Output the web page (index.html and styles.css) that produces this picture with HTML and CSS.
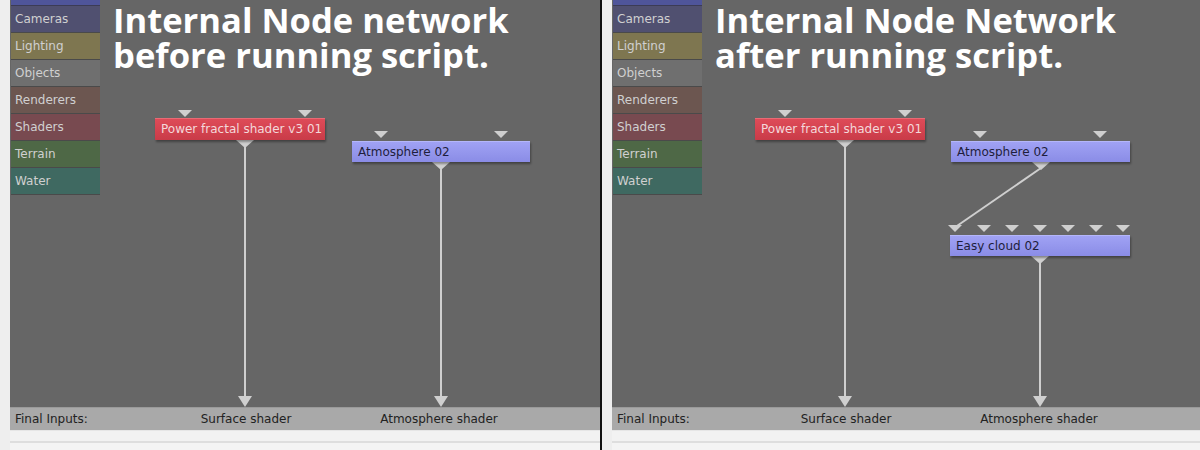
FILE: index.html
```html
<!DOCTYPE html>
<html>
<head>
<meta charset="utf-8">
<link rel="stylesheet" href="styles.css">
</head>
<body>
<div class="screen">
  <section class="panel panel-left">
    <div class="strip"></div>
    <div class="main">
      <div class="canvas">
        <ul class="cats">
          <li class="cat c-top"></li>
          <li class="cat c-cam">Cameras</li>
          <li class="cat c-light">Lighting</li>
          <li class="cat c-obj">Objects</li>
          <li class="cat c-rend">Renderers</li>
          <li class="cat c-shad">Shaders</li>
          <li class="cat c-terr">Terrain</li>
          <li class="cat c-water">Water</li>
        </ul>
        <h1 class="title">Internal Node network<br>before running script.</h1>
        <svg class="wires" width="590" height="407" viewBox="0 0 590 407">
          <g fill="#cfcfcf">
            <polygon points="168,110 182,110 175,117"/>
            <polygon points="288,110 302,110 295,117"/>
            <polygon points="364,131 378,131 371,138"/>
            <polygon points="484,131 498,131 491,138"/>
            <polygon points="226,140 244,140 235,148"/>
            <polygon points="422,162 440,162 431,170"/>
            <polygon points="228,396 242,396 235,407"/>
            <polygon points="424,396 438,396 431,407"/>
          </g>
          <g stroke="#cfcfcf" stroke-width="2">
            <line x1="235" y1="146" x2="235" y2="398"/>
            <line x1="431" y1="168" x2="431" y2="398"/>
          </g>
        </svg>
        <div class="node red" style="left:145px;top:118px;width:170px;">Power fractal shader v3 01</div>
        <div class="node blue" style="left:342px;top:141px;width:178px;">Atmosphere 02</div>
      </div>
      <div class="inputs">
        <span class="fi">Final Inputs:</span>
        <span class="lbl" style="left:236px;">Surface shader</span>
        <span class="lbl" style="left:429px;">Atmosphere shader</span>
      </div>
      <div class="foot"></div>
    </div>
  </section>
  <section class="panel panel-right">
    <div class="strip"></div>
    <div class="main">
      <div class="canvas">
        <ul class="cats">
          <li class="cat c-top"></li>
          <li class="cat c-cam">Cameras</li>
          <li class="cat c-light">Lighting</li>
          <li class="cat c-obj">Objects</li>
          <li class="cat c-rend">Renderers</li>
          <li class="cat c-shad">Shaders</li>
          <li class="cat c-terr">Terrain</li>
          <li class="cat c-water">Water</li>
        </ul>
        <h1 class="title">Internal Node Network<br>after running script.</h1>
        <svg class="wires" width="588" height="407" viewBox="0 0 588 407">
          <g fill="#cfcfcf">
            <polygon points="166,110 180,110 173,117"/>
            <polygon points="286,110 300,110 293,117"/>
            <polygon points="361,131 375,131 368,138"/>
            <polygon points="481,131 495,131 488,138"/>
            <polygon points="224,140 242,140 233,148"/>
            <polygon points="420,162 438,162 429,170"/>
            <polygon points="336,225 350,225 343,232"/>
            <polygon points="365,225 379,225 372,232"/>
            <polygon points="393,225 407,225 400,232"/>
            <polygon points="421,225 435,225 428,232"/>
            <polygon points="449,225 463,225 456,232"/>
            <polygon points="477,225 491,225 484,232"/>
            <polygon points="504,225 518,225 511,232"/>
            <polygon points="419,256 437,256 428,264"/>
            <polygon points="226,396 240,396 233,407"/>
            <polygon points="421,396 435,396 428,407"/>
          </g>
          <g stroke="#cfcfcf" stroke-width="2">
            <line x1="233" y1="146" x2="233" y2="398"/>
            <line x1="429" y1="168" x2="342" y2="228"/>
            <line x1="428" y1="262" x2="428" y2="398"/>
          </g>
        </svg>
        <div class="node red" style="left:143px;top:118px;width:170px;">Power fractal shader v3 01</div>
        <div class="node blue" style="left:339px;top:141px;width:179px;">Atmosphere 02</div>
        <div class="node blue" style="left:338px;top:235px;width:180px;">Easy cloud 02</div>
      </div>
      <div class="inputs">
        <span class="fi">Final Inputs:</span>
        <span class="lbl" style="left:234px;">Surface shader</span>
        <span class="lbl" style="left:427px;">Atmosphere shader</span>
      </div>
      <div class="foot"></div>
    </div>
  </section>
</div>
</body>
</html>
```
FILE: styles.css
```css
html, body {
  margin: 0;
  padding: 0;
  background: #f0f0f0;
}
.screen {
  display: flex;
  width: 1200px;
  height: 450px;
  overflow: hidden;
}
.panel {
  display: flex;
  height: 450px;
}
.panel-left {
  width: 600px;
}
.panel-right {
  width: 598px;
  border-left: 2px solid #111;
}
.strip {
  width: 10px;
  flex: none;
  background: #eeeeee;
}
.main {
  flex: 1;
  display: flex;
  flex-direction: column;
}
.canvas {
  position: relative;
  height: 407px;
  background: #666666;
  overflow: hidden;
}
.cats {
  list-style: none;
  margin: 0;
  padding: 0 0 0 1px;
  width: 89px;
}
.cat {
  height: 26px;
  border-bottom: 1px solid #4a4a4a;
  font-family: "DejaVu Sans", Verdana, sans-serif;
  font-size: 12px;
  line-height: 26px;
  padding-left: 4px;
  color: #d0d0d0;
}
.c-top { height: 5px; background: #4f559a; border-bottom-color: #3c3c55; }
.c-cam { background: #505070; }
.c-light { background: #7e7650; }
.c-obj { background: #6f6f6f; }
.c-rend { background: #6c5650; }
.c-shad { background: #784a50; }
.c-terr { background: #4e6846; }
.c-water { background: #3f6961; }
.title {
  position: absolute;
  left: 103px;
  top: 2px;
  margin: 0;
  font-family: "Open Sans", sans-serif;
  font-weight: 700;
  font-size: 34.6px;
  line-height: 35px;
  color: #ffffff;
}
.wires {
  position: absolute;
  left: 0;
  top: 0;
}
.node {
  position: absolute;
  height: 21px;
  box-sizing: border-box;
  padding-left: 6px;
  font-family: "DejaVu Sans", Verdana, sans-serif;
  font-size: 12px;
  line-height: 20px;
  box-shadow: 1px 2px 2px rgba(0,0,0,0.35);
  white-space: nowrap;
}
.red {
  height: 22px;
  line-height: 21px;
  background: linear-gradient(#de4b58, #c93b48);
  border-top: 1px solid #e86a74;
  color: #f4d8da;
}
.blue {
  background: linear-gradient(#a0a2f4, #8a8ce6);
  border-top: 1px solid #b4b6fa;
  color: #1e1e3c;
}
.inputs {
  position: relative;
  height: 22px;
  background: #a9a9a9;
  border-top: 1px solid #9a9a9a;
  font-family: "DejaVu Sans", Verdana, sans-serif;
  font-size: 12px;
  line-height: 22px;
  color: #222222;
}
.fi {
  padding-left: 5px;
}
.lbl {
  position: absolute;
  top: 0;
  transform: translateX(-50%);
  white-space: nowrap;
}
.foot {
  flex: 1;
  background: #f2f2f2;
  border-top: 1px solid #e6e6e6;
  background-image: linear-gradient(#f2f2f2 0, #f2f2f2 10px, #dedede 10px, #dedede 12px, #f4f4f4 12px);
}
```
